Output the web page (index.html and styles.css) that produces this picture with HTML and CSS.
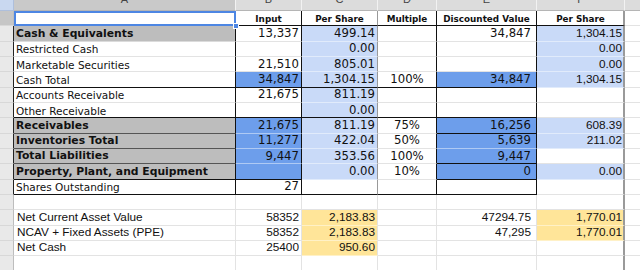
FILE: index.html
```
<!DOCTYPE html>
<html>
<head>
<meta charset="utf-8">
<link rel="stylesheet" href="styles.css">
</head>
<body>
<div class="sheet">
  <div class="corner"></div>
  <div class="ch sel"><span>A</span></div>
  <div class="ch"><span>B</span></div>
  <div class="ch"><span>C</span></div>
  <div class="ch"><span>D</span></div>
  <div class="ch"><span>E</span></div>
  <div class="ch"><span>F</span></div>
  <div class="ch"><span>G</span></div>

  <div class="rh sel"></div>
  <div class="c A1"><div class="selbox"></div><div class="handle"></div></div>
  <div class="c hdr kb kr">Input</div>
  <div class="c hdr kb gr">Per Share</div>
  <div class="c hdr kb kr">Multiple</div>
  <div class="c hdr kb kr">Discounted Value</div>
  <div class="c hdr kb F">Per Share</div>
  <div class="c"></div>

  <div class="rh k"></div>
  <div class="c lbl bold g kr">Cash &amp; Equivalents</div>
  <div class="c num kr">13,337</div>
  <div class="c num lb gr">499.14</div>
  <div class="c ctr kr"></div>
  <div class="c num E kr">34,847</div>
  <div class="c num ar lb F">1,304.15</div>
  <div class="c"></div>

  <div class="rh k"></div>
  <div class="c lbl kr">Restricted Cash</div>
  <div class="c num kr"></div>
  <div class="c num lb gr">0.00</div>
  <div class="c ctr kr"></div>
  <div class="c num E kr"></div>
  <div class="c num ar lb F">0.00</div>
  <div class="c"></div>

  <div class="rh k"></div>
  <div class="c lbl kr">Marketable Securities</div>
  <div class="c num kr">21,510</div>
  <div class="c num lb gr">805.01</div>
  <div class="c ctr kr"></div>
  <div class="c num E kr"></div>
  <div class="c num ar lb F">0.00</div>
  <div class="c"></div>

  <div class="rh k"></div>
  <div class="c lbl kr kb">Cash Total</div>
  <div class="c num db kr kb">34,847</div>
  <div class="c num lb gr kb">1,304.15</div>
  <div class="c ctr kr kb">100%</div>
  <div class="c num E db kr kb">34,847</div>
  <div class="c num ar lb F">1,304.15</div>
  <div class="c"></div>

  <div class="rh k"></div>
  <div class="c lbl kr">Accounts Receivable</div>
  <div class="c num kr">21,675</div>
  <div class="c num lb gr">811.19</div>
  <div class="c ctr kr"></div>
  <div class="c num E kr"></div>
  <div class="c num ar F"></div>
  <div class="c"></div>

  <div class="rh k"></div>
  <div class="c lbl kr kb">Other Receivable</div>
  <div class="c num kr kb"></div>
  <div class="c num lb gr kb">0.00</div>
  <div class="c ctr kr kb"></div>
  <div class="c num E kr kb"></div>
  <div class="c num ar F"></div>
  <div class="c"></div>

  <div class="rh k"></div>
  <div class="c lbl bold g kr mb">Receivables</div>
  <div class="c num db kr">21,675</div>
  <div class="c num lb gr">811.19</div>
  <div class="c ctr kr">75%</div>
  <div class="c num E db kr kb">16,256</div>
  <div class="c num ar lb F">608.39</div>
  <div class="c"></div>

  <div class="rh k"></div>
  <div class="c lbl bold g kr mb">Inventories Total</div>
  <div class="c num db kr">11,277</div>
  <div class="c num lb gr">422.04</div>
  <div class="c ctr kr">50%</div>
  <div class="c num E db kr">5,639</div>
  <div class="c num ar lb F">211.02</div>
  <div class="c"></div>

  <div class="rh k"></div>
  <div class="c lbl bold g kr mb">Total Liabilities</div>
  <div class="c num db kr">9,447</div>
  <div class="c num lb gr">353.56</div>
  <div class="c ctr kr">100%</div>
  <div class="c num E db kr kb">9,447</div>
  <div class="c num ar F"></div>
  <div class="c"></div>

  <div class="rh k"></div>
  <div class="c lbl bold g kr kb">Property, Plant, and Equipment</div>
  <div class="c num db kr kb"></div>
  <div class="c num lb gr">0.00</div>
  <div class="c ctr kr">10%</div>
  <div class="c num E db kr kb">0</div>
  <div class="c num ar lb F">0.00</div>
  <div class="c"></div>

  <div class="rh k"></div>
  <div class="c lbl kr kb">Shares Outstanding</div>
  <div class="c num kr kb">27</div>
  <div class="c num gr kb"></div>
  <div class="c ctr kr kb"></div>
  <div class="c num E kr kb"></div>
  <div class="c num ar F"></div>
  <div class="c"></div>

  <div class="rh"></div>
  <div class="c"></div>
  <div class="c"></div>
  <div class="c"></div>
  <div class="c"></div>
  <div class="c"></div>
  <div class="c F"></div>
  <div class="c"></div>

  <div class="rh"></div>
  <div class="c ar lbl2">Net Current Asset Value</div>
  <div class="c num ar">58352</div>
  <div class="c num ar y">2,183.83</div>
  <div class="c"></div>
  <div class="c num ar E">47294.75</div>
  <div class="c num ar y F">1,770.01</div>
  <div class="c"></div>

  <div class="rh"></div>
  <div class="c ar lbl2">NCAV + Fixed Assets (PPE)</div>
  <div class="c num ar">58352</div>
  <div class="c num ar y">2,183.83</div>
  <div class="c"></div>
  <div class="c num ar E">47,295</div>
  <div class="c num ar y F">1,770.01</div>
  <div class="c"></div>

  <div class="rh"></div>
  <div class="c ar lbl2">Net Cash</div>
  <div class="c num ar">25400</div>
  <div class="c num ar y">950.60</div>
  <div class="c"></div>
  <div class="c num ar E"></div>
  <div class="c num ar F"></div>
  <div class="c"></div>

  <div class="rh"></div>
  <div class="c"></div>
  <div class="c"></div>
  <div class="c"></div>
  <div class="c"></div>
  <div class="c"></div>
  <div class="c F"></div>
  <div class="c"></div>
</div>
</body>
</html>
```
FILE: styles.css
```
* { box-sizing: border-box; }
html, body { margin: 0; padding: 0; background: #fff; }
body { width: 640px; height: 270px; overflow: hidden; }

.sheet {
  display: grid;
  grid-template-columns: 14px 222px 66px 76px 59px 100px 88px 40px;
  grid-template-rows: 11px repeat(17, 15.33px);
  font-family: "DejaVu Sans", Verdana, sans-serif;
  font-size: 11.7px;
  color: #111;
}

.corner {
  background: #c9d8f0;
  border-right: 1px solid #aebfdc;
  border-bottom: 1px solid #aebfdc;
}

.ch {
  background: #dcdcdc;
  border-right: 1px solid #f2f2f2;
  border-bottom: 1px solid #b5b5b5;
  overflow: hidden;
  text-align: center;
  font-family: "Liberation Sans", Arial, sans-serif;
  font-size: 11px;
  line-height: 11px;
  color: #444;
}
.ch span { display: block; margin-top: -6px; }
.ch.sel { background: #c9c9c9; }

.rh {
  background: #e9e9e9;
  border-right: 1px solid #bdbdbd;
  border-bottom: 1px solid #d8d8d8;
}
.rh.sel { background: #c6c6c6; }
.rh.k { border-right-color: #222; }

.c {
  border-right: 1px solid #e3e3e3;
  border-bottom: 1px solid #e3e3e3;
  display: flex;
  align-items: flex-end;
  padding: 0 2px 1px 2px;
  white-space: nowrap;
  overflow: hidden;
  line-height: 1;
}
.num { justify-content: flex-end; }
.ctr { justify-content: center; }
.lbl { font-size: 10.5px; padding-left: 2px; }
.lbl2 { padding-left: 3px; }
.bold { font-weight: bold; font-size: 10.8px; }
.hdr { font-weight: bold; font-size: 8.8px; justify-content: center; padding-bottom: 2px; }
.ar { font-family: "Liberation Sans", Arial, sans-serif; font-size: 11.8px; }

.g { background: #bdbdbd; }
.db { background: #6d9eeb; }
.lb { background: #c9daf8; }
.y { background: #ffe599; }
.g, .db, .lb, .y { border-bottom-color: rgba(255, 255, 255, 0.45); }

.mb { border-bottom-color: #555; }
.kb { border-bottom-color: #111; }
.kr { border-right-color: #111; }
.gr { border-right-color: #999; }
.E { padding-right: 5px; }
.F { border-right: 2px solid #9a9a9a; padding-right: 1px; }

.A1 { position: relative; overflow: visible; }
.selbox {
  position: absolute;
  left: 0; top: 0; right: -1px; bottom: -1px;
  border: 2px solid #4d86e3;
}
.handle {
  position: absolute;
  right: -4px; bottom: -4px;
  width: 6px; height: 6px;
  background: #4d86e3;
  border: 1px solid #fff;
  z-index: 2;
}
```
